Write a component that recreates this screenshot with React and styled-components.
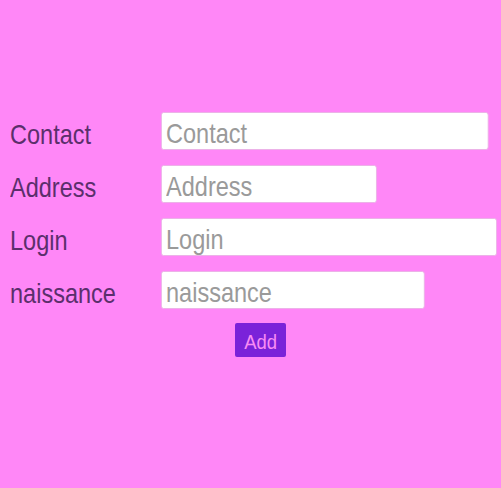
import React from "react";
import styled, { createGlobalStyle } from "styled-components";

const SQUEEZE = 0.84;

const Global = createGlobalStyle`
  html, body {
    margin: 0;
    padding: 0;
    background: #ff87f7;
    overflow: hidden;
  }
  body {
    font-family: "Liberation Sans", Arial, sans-serif;
  }
`;

const Page = styled.div`
  width: 501px;
  height: 488px;
  box-sizing: border-box;
  padding: 112px 0 0 10px;
  background: #ff87f7;
`;

const Form = styled.form`
  display: flex;
  flex-direction: column;
  gap: 15px;
`;

const Row = styled.div`
  display: flex;
  align-items: center;
  height: 38px;
`;

const Label = styled.label`
  width: 151px;
  flex: none;
  font-size: 28px;
  color: #5b2f6c;
  line-height: 1;
  padding-top: 8px;
`;

const Squeezed = styled.span`
  display: inline-block;
  transform: scaleX(${SQUEEZE});
  transform-origin: left center;
  white-space: nowrap;
`;

const Input = styled.input`
  flex: none;
  box-sizing: border-box;
  width: ${(p) => p.$w / SQUEEZE}px;
  height: 38px;
  margin: 0;
  padding: 6px 5px 0;
  border: 1px solid #eab0e6;
  border-radius: 3px;
  background: #fff;
  font-family: inherit;
  font-size: 28px;
  color: #333;
  outline: none;
  transform: scaleX(${SQUEEZE});
  transform-origin: left center;
  &::placeholder {
    color: #9a9a9a;
  }
`;

const ButtonRow = styled.div`
  display: flex;
  padding-left: 225px;
  margin-top: -1px;
`;

const Button = styled.button`
  display: flex;
  justify-content: center;
  align-items: center;
  width: 51px;
  height: 34px;
  padding: 3px 0 0;
  border: none;
  border-radius: 2px;
  background: #7a22d9;
  color: #f88cf4;
  font-family: inherit;
  font-size: 21px;
  line-height: 1;
  cursor: pointer;
`;

const ButtonText = styled.span`
  display: inline-block;
  transform: scaleX(0.88);
`;

const fields = [
  { name: "Contact", w: 328 },
  { name: "Address", w: 216 },
  { name: "Login", w: 336 },
  { name: "naissance", w: 264 },
];

export default function App() {
  return (
    <Page>
      <Global />
      <Form onSubmit={(e) => e.preventDefault()}>
        {fields.map((f) => (
          <Row key={f.name}>
            <Label htmlFor={f.name}>
              <Squeezed>{f.name}</Squeezed>
            </Label>
            <Input id={f.name} $w={f.w} placeholder={f.name} />
          </Row>
        ))}
        <ButtonRow>
          <Button type="submit">
            <ButtonText>Add</ButtonText>
          </Button>
        </ButtonRow>
      </Form>
    </Page>
  );
}
